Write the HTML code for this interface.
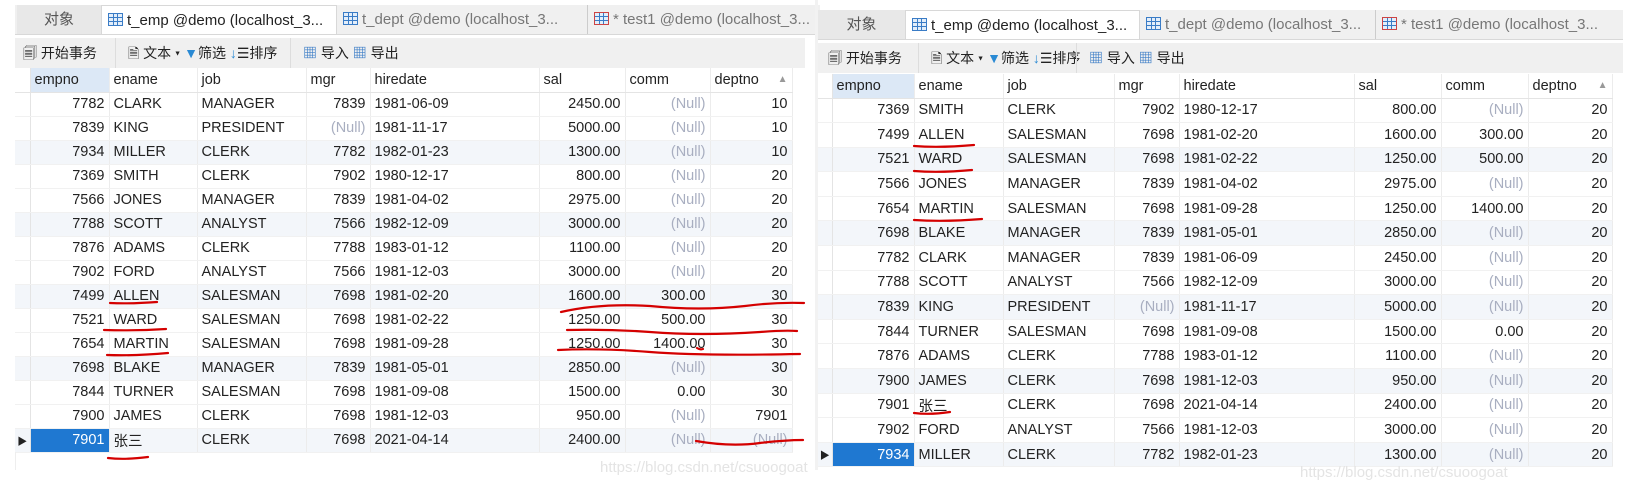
<!DOCTYPE html>
<html><head><meta charset="utf-8"><style>
*{margin:0;padding:0;box-sizing:border-box}
body{width:1629px;height:502px;background:#fff;position:relative;overflow:hidden;font-family:"Liberation Sans","Noto Sans CJK SC",sans-serif;font-size:14px;color:#222}
.panel{position:absolute}
.tabs{position:absolute;left:0;height:30px;background:#f0f0f0;border-bottom:1px solid #d8d8d8;white-space:nowrap;overflow:hidden}
.tab{position:absolute;top:0;height:30px;line-height:30px;font-size:15px;color:#777;padding-left:6px}
.tab.obj{background:#e8e8e8;text-align:center;color:#555;padding:0}
.tab.act{background:#fff;color:#222;border:1px solid #d8d8d8;border-bottom:none}
.tico{display:inline-block;width:15px;height:13px;border:1.5px solid #3a7cc6;vertical-align:-1px;margin-right:4px;background:linear-gradient(#3a7cc6,#3a7cc6) 0 3px/100% 1px no-repeat,linear-gradient(#3a7cc6,#3a7cc6) 0 7px/100% 1px no-repeat,linear-gradient(90deg,#3a7cc6,#3a7cc6) 4px 0/1px 100% no-repeat,linear-gradient(90deg,#3a7cc6,#3a7cc6) 8px 0/1px 100% no-repeat;background-color:#e3eefa}
.tb{position:absolute;left:0;height:30px;background:#f0f0f0;font-size:14px;line-height:30px;white-space:nowrap;overflow:hidden}
.tb span{position:absolute;top:0}
table{position:absolute;border-collapse:collapse;table-layout:fixed}
td{height:24px;border-right:1px solid #ececec;border-bottom:1px solid #f1f1f1;padding:0 4px;white-space:nowrap;overflow:hidden;font-size:14.5px}
tr.h td{background:#fff;border-bottom:1px solid #e4e4e4;color:#222}
td.n{text-align:right}
td.i{background:#fff;border-right:1px solid #e4e4e4;padding:0}
.nl{color:#a8aec0}
tr.s td{background:#f3f6fa}
td.sel{background:#1f78d1!important;color:#fff}
.wm{position:absolute;color:#e4e4e4;font-size:15px}
</style></head><body>

<!-- LEFT PANEL -->
<div class="panel" style="left:0;top:0;width:805px;height:470px">
 <div class="tabs" style="top:5px;width:805px;left:15px">
  <div class="tab obj" style="left:2px;width:84px">对象</div>
  <div class="tab act" style="left:86px;width:236px"><span class="tico"></span>t_emp @demo (localhost_3...</div>
  <div class="tab" style="left:322px;width:230px"><span class="tico"></span>t_dept @demo (localhost_3...</div>
  <div class="tab" style="left:572px;width:230px;border-left:1px solid #ccc"><span class="tico" style="border-color:#c44"></span>* test1 @demo (localhost_3...</div>
 </div>
 <div class="tb" style="top:38px;left:15px;width:790px">
  <span style="left:8px">🗐 开始事务</span>
  <span style="left:100px;border-left:1px solid #ddd;padding-left:12px">🗎 文本 ▾ <b style="color:#2a8ad4">▼</b>筛选 <b style="color:#2a8ad4;font-weight:normal">↓</b>☰排序</span>
  <span style="left:275px;border-left:1px solid #ddd;padding-left:12px"><b style="color:#3a7cc6">▦</b> 导入 <b style="color:#3a7cc6">▦</b> 导出</span>
 </div>
 <table style="left:15px;top:68px;width:777px">
  <colgroup><col style="width:15px"><col style="width:79px"><col style="width:88px"><col style="width:109px"><col style="width:64px"><col style="width:169px"><col style="width:86px"><col style="width:85px"><col style="width:82px"></colgroup>
  <tr class="h"><td class="i"></td><td style="background:#dce8f6">empno</td><td>ename</td><td>job</td><td>mgr</td><td>hiredate</td><td>sal</td><td>comm</td><td>deptno <span style="color:#999;font-size:10px;float:right;margin-top:2px">▲</span></td></tr>
  <tr><td class="i"></td><td class="n">7782</td><td>CLARK</td><td>MANAGER</td><td class="n">7839</td><td>1981-06-09</td><td class="n">2450.00</td><td class="n nl">(Null)</td><td class="n">10</td></tr>
  <tr><td class="i"></td><td class="n">7839</td><td>KING</td><td>PRESIDENT</td><td class="n nl">(Null)</td><td>1981-11-17</td><td class="n">5000.00</td><td class="n nl">(Null)</td><td class="n">10</td></tr>
  <tr class="s"><td class="i"></td><td class="n">7934</td><td>MILLER</td><td>CLERK</td><td class="n">7782</td><td>1982-01-23</td><td class="n">1300.00</td><td class="n nl">(Null)</td><td class="n">10</td></tr>
  <tr><td class="i"></td><td class="n">7369</td><td>SMITH</td><td>CLERK</td><td class="n">7902</td><td>1980-12-17</td><td class="n">800.00</td><td class="n nl">(Null)</td><td class="n">20</td></tr>
  <tr><td class="i"></td><td class="n">7566</td><td>JONES</td><td>MANAGER</td><td class="n">7839</td><td>1981-04-02</td><td class="n">2975.00</td><td class="n nl">(Null)</td><td class="n">20</td></tr>
  <tr class="s"><td class="i"></td><td class="n">7788</td><td>SCOTT</td><td>ANALYST</td><td class="n">7566</td><td>1982-12-09</td><td class="n">3000.00</td><td class="n nl">(Null)</td><td class="n">20</td></tr>
  <tr><td class="i"></td><td class="n">7876</td><td>ADAMS</td><td>CLERK</td><td class="n">7788</td><td>1983-01-12</td><td class="n">1100.00</td><td class="n nl">(Null)</td><td class="n">20</td></tr>
  <tr><td class="i"></td><td class="n">7902</td><td>FORD</td><td>ANALYST</td><td class="n">7566</td><td>1981-12-03</td><td class="n">3000.00</td><td class="n nl">(Null)</td><td class="n">20</td></tr>
  <tr class="s"><td class="i"></td><td class="n">7499</td><td>ALLEN</td><td>SALESMAN</td><td class="n">7698</td><td>1981-02-20</td><td class="n">1600.00</td><td class="n">300.00</td><td class="n">30</td></tr>
  <tr><td class="i"></td><td class="n">7521</td><td>WARD</td><td>SALESMAN</td><td class="n">7698</td><td>1981-02-22</td><td class="n">1250.00</td><td class="n">500.00</td><td class="n">30</td></tr>
  <tr><td class="i"></td><td class="n">7654</td><td>MARTIN</td><td>SALESMAN</td><td class="n">7698</td><td>1981-09-28</td><td class="n">1250.00</td><td class="n">1400.00</td><td class="n">30</td></tr>
  <tr class="s"><td class="i"></td><td class="n">7698</td><td>BLAKE</td><td>MANAGER</td><td class="n">7839</td><td>1981-05-01</td><td class="n">2850.00</td><td class="n nl">(Null)</td><td class="n">30</td></tr>
  <tr><td class="i"></td><td class="n">7844</td><td>TURNER</td><td>SALESMAN</td><td class="n">7698</td><td>1981-09-08</td><td class="n">1500.00</td><td class="n">0.00</td><td class="n">30</td></tr>
  <tr><td class="i"></td><td class="n">7900</td><td>JAMES</td><td>CLERK</td><td class="n">7698</td><td>1981-12-03</td><td class="n">950.00</td><td class="n nl">(Null)</td><td class="n">7901</td></tr>
  <tr class="s"><td class="i" style="font-size:10px;text-align:center">▶</td><td class="n sel">7901</td><td>张三</td><td>CLERK</td><td class="n">7698</td><td>2021-04-14</td><td class="n">2400.00</td><td class="n nl">(Null)</td><td class="n nl">(Null)</td></tr>
 </table>
 <div style="position:absolute;left:15px;top:452px;width:1px;height:18px;background:#eee"></div>
 <div class="wm" style="left:600px;top:459px">https://blog.csdn.net/csuoogoat</div>
</div>

<!-- RIGHT PANEL -->
<div class="panel" style="left:815px;top:0;width:814px;height:480px">
 <div style="position:absolute;left:0;top:0;width:3px;height:470px;background:#f2f2f2"></div>
 <div class="tabs" style="top:10px;width:805px;left:3px">
  <div class="tab obj" style="left:0;width:87px">对象</div>
  <div class="tab act" style="left:87px;width:235px"><span class="tico"></span>t_emp @demo (localhost_3...</div>
  <div class="tab" style="left:322px;width:230px"><span class="tico"></span>t_dept @demo (localhost_3...</div>
  <div class="tab" style="left:557px;width:248px;border-left:1px solid #ccc"><span class="tico" style="border-color:#c44"></span>* test1 @demo (localhost_3...</div>
 </div>
 <div class="tb" style="top:43px;left:3px;width:805px">
  <span style="left:10px">🗐 开始事务</span>
  <span style="left:100px;border-left:1px solid #ddd;padding-left:12px">🗎 文本 ▾ <b style="color:#2a8ad4">▼</b>筛选 <b style="color:#2a8ad4;font-weight:normal">↓</b>☰排序</span>
  <span style="left:258px;border-left:1px solid #ddd;padding-left:12px"><b style="color:#3a7cc6">▦</b> 导入 <b style="color:#3a7cc6">▦</b> 导出</span>
 </div>
 <table style="left:3px;top:74px;width:794px">
  <colgroup><col style="width:14px"><col style="width:82px"><col style="width:89px"><col style="width:111px"><col style="width:65px"><col style="width:175px"><col style="width:87px"><col style="width:87px"><col style="width:84px"></colgroup>
  <tr class="h"><td class="i"></td><td style="background:#dce8f6">empno</td><td>ename</td><td>job</td><td>mgr</td><td>hiredate</td><td>sal</td><td>comm</td><td>deptno <span style="color:#999;font-size:10px;float:right;margin-top:2px">▲</span></td></tr>
  <tr style="height:24.6px"><td class="i"></td><td class="n">7369</td><td>SMITH</td><td>CLERK</td><td class="n">7902</td><td>1980-12-17</td><td class="n">800.00</td><td class="n nl">(Null)</td><td class="n">20</td></tr>
  <tr style="height:24.6px"><td class="i"></td><td class="n">7499</td><td>ALLEN</td><td>SALESMAN</td><td class="n">7698</td><td>1981-02-20</td><td class="n">1600.00</td><td class="n">300.00</td><td class="n">20</td></tr>
  <tr class="s" style="height:24.6px"><td class="i"></td><td class="n">7521</td><td>WARD</td><td>SALESMAN</td><td class="n">7698</td><td>1981-02-22</td><td class="n">1250.00</td><td class="n">500.00</td><td class="n">20</td></tr>
  <tr style="height:24.6px"><td class="i"></td><td class="n">7566</td><td>JONES</td><td>MANAGER</td><td class="n">7839</td><td>1981-04-02</td><td class="n">2975.00</td><td class="n nl">(Null)</td><td class="n">20</td></tr>
  <tr style="height:24.6px"><td class="i"></td><td class="n">7654</td><td>MARTIN</td><td>SALESMAN</td><td class="n">7698</td><td>1981-09-28</td><td class="n">1250.00</td><td class="n">1400.00</td><td class="n">20</td></tr>
  <tr class="s" style="height:24.6px"><td class="i"></td><td class="n">7698</td><td>BLAKE</td><td>MANAGER</td><td class="n">7839</td><td>1981-05-01</td><td class="n">2850.00</td><td class="n nl">(Null)</td><td class="n">20</td></tr>
  <tr style="height:24.6px"><td class="i"></td><td class="n">7782</td><td>CLARK</td><td>MANAGER</td><td class="n">7839</td><td>1981-06-09</td><td class="n">2450.00</td><td class="n nl">(Null)</td><td class="n">20</td></tr>
  <tr style="height:24.6px"><td class="i"></td><td class="n">7788</td><td>SCOTT</td><td>ANALYST</td><td class="n">7566</td><td>1982-12-09</td><td class="n">3000.00</td><td class="n nl">(Null)</td><td class="n">20</td></tr>
  <tr class="s" style="height:24.6px"><td class="i"></td><td class="n">7839</td><td>KING</td><td>PRESIDENT</td><td class="n nl">(Null)</td><td>1981-11-17</td><td class="n">5000.00</td><td class="n nl">(Null)</td><td class="n">20</td></tr>
  <tr style="height:24.6px"><td class="i"></td><td class="n">7844</td><td>TURNER</td><td>SALESMAN</td><td class="n">7698</td><td>1981-09-08</td><td class="n">1500.00</td><td class="n">0.00</td><td class="n">20</td></tr>
  <tr style="height:24.6px"><td class="i"></td><td class="n">7876</td><td>ADAMS</td><td>CLERK</td><td class="n">7788</td><td>1983-01-12</td><td class="n">1100.00</td><td class="n nl">(Null)</td><td class="n">20</td></tr>
  <tr class="s" style="height:24.6px"><td class="i"></td><td class="n">7900</td><td>JAMES</td><td>CLERK</td><td class="n">7698</td><td>1981-12-03</td><td class="n">950.00</td><td class="n nl">(Null)</td><td class="n">20</td></tr>
  <tr style="height:24.6px"><td class="i"></td><td class="n">7901</td><td>张三</td><td>CLERK</td><td class="n">7698</td><td>2021-04-14</td><td class="n">2400.00</td><td class="n nl">(Null)</td><td class="n">20</td></tr>
  <tr style="height:24.6px"><td class="i"></td><td class="n">7902</td><td>FORD</td><td>ANALYST</td><td class="n">7566</td><td>1981-12-03</td><td class="n">3000.00</td><td class="n nl">(Null)</td><td class="n">20</td></tr>
  <tr class="s" style="height:24.6px"><td class="i" style="font-size:10px;text-align:center">▶</td><td class="n sel">7934</td><td>MILLER</td><td>CLERK</td><td class="n">7782</td><td>1982-01-23</td><td class="n">1300.00</td><td class="n nl">(Null)</td><td class="n">20</td></tr>
 </table>
 <div class="wm" style="left:485px;top:464px">https://blog.csdn.net/csuoogoat</div>
</div>

<!-- red annotations -->
<svg style="position:absolute;left:0;top:0" width="1629" height="502" fill="none" stroke="#d40000" stroke-width="2.2" stroke-linecap="round">
 <path d="M110 303 Q130 304 157 302"/>
 <path d="M104 330 Q135 331 166 329"/>
 <path d="M107 355 Q135 356 168 353"/>
 <path d="M108 458 Q125 460 148 457"/>
 <path d="M561 312 Q600 303 650 306 Q700 311 745 306 Q775 302 804 303"/>
 <path d="M567 330 Q610 329 650 332 Q700 336 760 332 Q785 330 797 331"/>
 <path d="M558 350 Q600 348 650 352 Q700 356 800 354"/>
 <path d="M697 348 Q700 350 703 349"/>
 <path d="M696 441 Q730 447 760 443 Q785 440 803 440"/>
 <path d="M914 146 Q940 148 974 145"/>
 <path d="M914 171 Q940 173 972 170"/>
 <path d="M914 220 Q945 222 982 219"/>
 <path d="M914 413 Q930 415 950 412"/>
</svg>
</body></html>
